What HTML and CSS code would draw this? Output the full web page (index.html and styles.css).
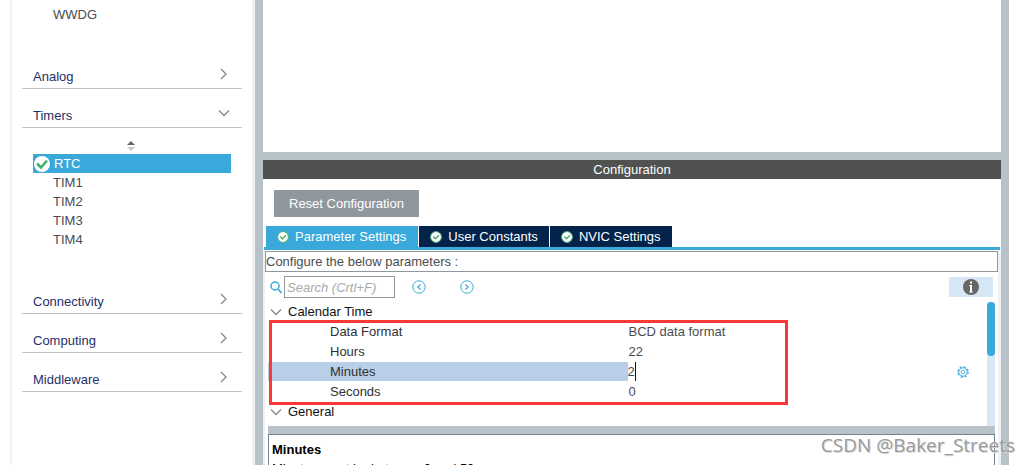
FILE: index.html
```html
<!DOCTYPE html>
<html lang="en">
<head>
<meta charset="utf-8">
<title>RTC Configuration</title>
<link rel="stylesheet" href="styles.css">
</head>
<body>
<svg class="defs" width="0" height="0" aria-hidden="true">
  <symbol id="right" viewBox="0 0 12 12"><path d="M3 1l5 5-5 5" fill="none" stroke="#868686" stroke-width="1.3"/></symbol>
  <symbol id="down" viewBox="0 0 12 12"><path d="M1 3.500l5 5 5-5" fill="none" stroke="#868686" stroke-width="1.3"/></symbol>
  <symbol id="ok" viewBox="0 0 16 16"><circle cx="8" cy="8" r="8" fill="#fff"/><path d="M3 7.500l4 4L13 4.500" fill="none" stroke="#46b168" stroke-width="2.600"/></symbol>
  <symbol id="ok-ring" viewBox="0 0 12 12"><circle cx="6" cy="6" r="5.400" fill="#fff" stroke="#54b278" stroke-width="1"/><path d="M3.200 5.500l2.300 2.300 3.500-3.600" fill="none" stroke="#46a96c" stroke-width="1.300"/></symbol>
</svg>
<div class="app">
  <nav class="sidebar">
    <ul class="items first"><li>WWDG</li></ul>
    <button class="category">Analog<svg class="chevron"><use href="#right"/></svg></button>
    <button class="category">Timers<svg class="chevron"><use href="#down"/></svg></button>
    <div class="timers">
      <button class="sort" aria-label="Sort"><svg width="10" height="12" viewBox="0 0 10 12"><path d="M1 5l4-4 4 4z" fill="#666"/><path d="M1 7l4 4 4-4z" fill="#c8c8c8"/></svg></button>
      <ul class="items">
        <li class="selected"><svg class="tick"><use href="#ok"/></svg>RTC</li>
        <li>TIM1</li>
        <li>TIM2</li>
        <li>TIM3</li>
        <li>TIM4</li>
      </ul>
    </div>
    <button class="category">Connectivity<svg class="chevron"><use href="#right"/></svg></button>
    <button class="category">Computing<svg class="chevron"><use href="#right"/></svg></button>
    <button class="category">Middleware<svg class="chevron"><use href="#right"/></svg></button>
  </nav>
  <main class="main">
    <section class="mode"></section>
    <h1 class="title">Configuration</h1>
    <div class="toolbar"><button class="reset">Reset Configuration</button></div>
    <div class="tabs" role="tablist">
      <button class="tab active" role="tab"><svg class="badge"><use href="#ok-ring"/></svg>Parameter Settings</button>
      <button class="tab" role="tab"><svg class="badge"><use href="#ok-ring"/></svg>User Constants</button>
      <button class="tab" role="tab"><svg class="badge"><use href="#ok-ring"/></svg>NVIC Settings</button>
    </div>
    <section class="panel">
      <p class="hint">Configure the below parameters :</p>
      <div class="search">
        <label for="q" aria-label="Search"><svg width="12" height="14" viewBox="0 0 12 14"><circle cx="5" cy="6" r="4" fill="none" stroke="#39a9dc" stroke-width="1.500"/><path d="M8 9l3.500 4" stroke="#39a9dc" stroke-width="1.800"/></svg></label>
        <input id="q" type="text" placeholder="Search (Crtl+F)">
        <button class="round" aria-label="Previous"><svg width="14" height="14" viewBox="0 0 14 14" fill="none" stroke="#39a9dc"><circle cx="7" cy="7" r="6.200"/><path d="M8.500 4.500L5.800 7l2.700 2.500" stroke-width="1.200"/></svg></button>
        <button class="round" aria-label="Next"><svg width="14" height="14" viewBox="0 0 14 14" fill="none" stroke="#39a9dc"><circle cx="7" cy="7" r="6.200"/><path d="M5.500 4.500L8.200 7 5.500 9.500" stroke-width="1.200"/></svg></button>
        <button class="info" aria-label="Information"><svg width="16" height="16" viewBox="0 0 16 16"><circle cx="8" cy="8" r="8" fill="#666"/><path d="M7 2.500h2v2H7zM7 6h2v7.500H7z" fill="#fff"/><path d="M6 6.500h1M6 13h4" stroke="#ddd"/></svg></button>
      </div>
      <div class="tree">
        <div class="rows">
          <h2 class="group"><svg class="chevron"><use href="#down"/></svg>Calendar Time</h2>
          <div class="marked">
            <table class="params">
              <tr><th scope="row">Data Format</th><td>BCD data format</td></tr>
              <tr><th scope="row">Hours</th><td>22</td></tr>
              <tr class="current"><th scope="row"><label for="minutes">Minutes</label></th><td><div class="edit"><input id="minutes" type="text" size="1" value="2"><button class="gear" aria-label="Options"><svg width="12" height="12" viewBox="0 0 12 12" fill="none" stroke="#39a9dc"><circle cx="6" cy="6" r="5.200" stroke-width="1.200" stroke-dasharray="2.200 1.884"/><circle cx="6" cy="6" r="4.200"/><circle cx="6" cy="6" r="1.900" stroke-width=".8"/></svg></button></div></td></tr>
              <tr><th scope="row">Seconds</th><td>0</td></tr>
            </table>
            <div class="frame"></div>
          </div>
          <h2 class="group"><svg class="chevron"><use href="#down"/></svg>General</h2>
        </div>
        <div class="scrollbar"><div class="thumb"></div></div>
      </div>
      <div class="description">
        <h3>Minutes</h3>
        <p>Minutes must be between 0 and 59.</p>
      </div>
    </section>
  </main>
</div>
<div class="watermark">CSDN @Baker_Streets</div>
</body>
</html>
```

FILE: styles.css
```css
* { box-sizing: border-box; }
body {
  margin: 0;
  overflow: hidden;
  background: #fff;
  color: #4b4b50;
  font: 13px/19px "Liberation Sans", Arial, sans-serif;
}
h1, h2, h3, p, ul { margin: 0; padding: 0; font-size: 13px; font-weight: 400; }
ul { list-style: none; }
button, input { font: inherit; border: 0; padding: 0; margin: 0; border-radius: 0; background: none; color: inherit; }
svg { display: block; flex: none; }
.defs { position: absolute; }
.app { display: flex; height: 100vh; padding: 0 21px 0 10px; }

.sidebar {
  flex: none;
  width: 245px;
  padding: 5px 10px 0;
  border-left: 2px solid #f0f1f2;
  border-right: 3px solid #f0f1f2;
}
.items { margin: 0 11px; }
.items li { padding-left: 20px; }
.first { height: 45px; }
.items .selected { display: flex; align-items: center; gap: 4px; padding-left: 1px; background: #39a9dc; color: #fff; }
.tick { width: 16px; height: 16px; }
.category {
  display: flex;
  justify-content: space-between;
  align-items: flex-end;
  width: 100%;
  height: 39px;
  padding: 0 12px 2px 11px;
  border-bottom: 1px solid #b8c3c9;
  color: #1f2f68;
}
.chevron { width: 12px; height: 12px; }
.category .chevron { margin-bottom: 6px; }
.timers { height: 147px; padding-top: 12px; }
.sort { display: block; margin: 0 auto 2px; padding-right: 2px; }

.main {
  flex: 1;
  min-width: 0;
  display: flex;
  flex-direction: column;
  border: solid #b8c3c9;
  border-width: 0 8px;
}
.mode { flex: none; height: 160px; border-bottom: 8px solid #b8c3c9; }
.title { background: #50524f; color: #fff; text-align: center; }
.toolbar { padding: 11px 11px 9px; }
.reset { display: block; height: 27px; padding: 0 15px; background: #90979d; color: #fff; }
.tabs { display: flex; gap: 1px; margin: 0 1px; padding-left: 2px; border-bottom: 3px solid #39a9dc; }
.tab { display: flex; align-items: center; gap: 6px; height: 21px; padding: 0 11px; background: #03234b; color: #fff; }
.tab.active { padding-right: 12px; background: #39a9dc; }
.badge { width: 12px; height: 12px; }

.panel {
  flex: 1;
  min-height: 0;
  display: flex;
  flex-direction: column;
  padding-top: 1px;
  border: solid #f0f1f2;
  border-width: 0 3px 0 2px;
}
.hint { height: 21px; border: 1px solid #90979d; }
.search { display: flex; align-items: center; height: 30px; padding: 0 5px; }
.search input { width: 111px; height: 22px; margin: 0 17px 0 2px; padding: 0 2px; border: 1px solid #90979d; }
.search input::placeholder { color: #aaa; font-style: italic; opacity: 1; }
.round { margin-right: 34px; }
.info { display: grid; place-items: center; width: 44px; height: 20px; margin-left: auto; background: #d8e7f5; }
.tree { flex: none; display: flex; margin: 0 3px; border-bottom: 8px solid #b8c3c9; height: 132px; }
.rows { flex: 1; line-height: 20px; }
.group { display: flex; align-items: center; gap: 6px; padding-left: 2px; color: #111; }
.marked { position: relative; }
.params { width: 100%; table-layout: fixed; border-spacing: 0; }
.params tr { height: 20px; }
.params th, .params td { padding: 0; font-weight: 400; text-align: left; }
.params th { padding-left: 62px; color: #303036; }
.params td { padding-left: 1px; }
.params .current { line-height: 19px; }
.params .current th { background: #b9cfe7; border-bottom: 1px solid #fff; }
.edit { display: flex; align-items: center; height: 19px; }
.params .current td { padding-left: 0; vertical-align: top; }
.edit input { width: 8px; height: 19px; border-right: 1px solid #111; }
.gear { margin: 1px 18px 0 auto; }
.frame { position: absolute; top: -2px; bottom: -3px; left: 1px; width: 519px; border: 3px solid #fa3838; pointer-events: none; }
.scrollbar { width: 8px; background: #d8e7f5; }
.thumb { height: 54px; border-radius: 4px; background: #39a9dc; }
.description { flex: 1; min-height: 0; overflow: hidden; margin: 0 3px; padding: 5px 3px; border: 1px solid #758493; border-bottom: 0; color: #000; }
.description h3 { font-weight: 700; }

.watermark {
  position: absolute;
  right: 15px;
  bottom: 8px;
  color: #999;
  font: 19px/24px "Open Sans", "Noto Sans", sans-serif;
  text-shadow: 1px 1px 0 #ddd;
}
```
